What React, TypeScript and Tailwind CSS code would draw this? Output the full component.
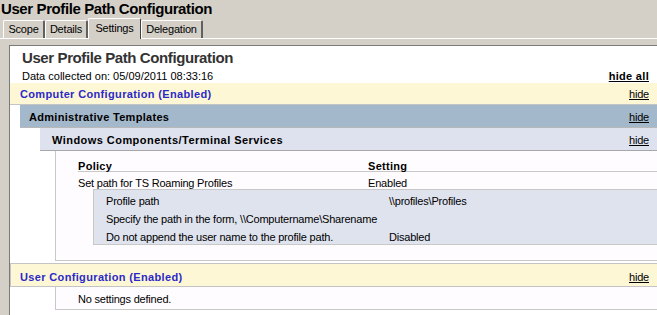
import React from "react"

const tabs = [
  { name: "Scope", w: "w-[42px]" },
  { name: "Details", w: "w-[43px]" },
  { name: "Settings", w: "w-[53px]", active: true },
  { name: "Delegation", w: "w-[62px]" },
]

const details = [
  { name: "Profile path", value: "\\\\profiles\\Profiles" },
  { name: "Specify the path in the form, \\\\Computername\\Sharename", value: "" },
  { name: "Do not append the user name to the profile path.", value: "Disabled" },
]

function Hide() {
  return <span className="underline underline-offset-[1px]">hide</span>
}

export default function App() {
  return (
    <div className="w-[657px] h-[315px] overflow-hidden bg-[#d4d0c8] font-['Liberation_Sans',Arial,sans-serif] text-[11px] tracking-[-0.2px] text-black">
      {/* window title */}
      <div className="h-[17px] pl-[1px] text-[15px] font-bold leading-[18px] tracking-[-0.4px]">
        User Profile Path Configuration
      </div>

      {/* tabs */}
      <div className="flex h-[21px] items-end pl-[3px]">
        {tabs.map((t) =>
          t.active ? (
            <div
              key={t.name}
              className={`${t.w} h-[21px] -mb-[1px] z-10 flex items-center justify-center rounded-t-[2px] border-t border-l border-white border-r border-r-[#404040] bg-[#d4d0c8] pb-[2px]`}
            >
              {t.name}
            </div>
          ) : (
            <div
              key={t.name}
              className={`${t.w} h-[18px] flex items-center justify-center rounded-t-[2px] border-t border-l border-white border-r-2 border-r-[#606060] bg-[#d4d0c8]`}
            >
              {t.name}
            </div>
          )
        )}
      </div>

      {/* tab panel */}
      <div className="border-t border-white pt-[6px] pl-[9px]">
        <div className="h-[300px] border-t border-l border-[#7a7a7a] bg-white">
          {/* report header */}
          <div className="h-[37px] pt-[3px]">
            <div className="h-[17px] pl-[12px] text-[15px] font-bold leading-[17px] tracking-[-0.4px] text-[#333333]">
              User Profile Path Configuration
            </div>
            <div className="mt-[3px] flex h-[14px] items-center justify-between pl-[12px] pr-[8px] leading-[14px]">
              <span className="tracking-normal">Data collected on: 05/09/2011 08:33:16</span>
              <span className="font-bold tracking-[0.3px] underline underline-offset-[1px]">hide all</span>
            </div>
          </div>

          {/* computer configuration */}
          <div className="flex h-[22px] items-center justify-between border-b border-[#c4c4c4] bg-[#fef7d6] pl-[10px] pr-[8px] pt-[2px]">
            <span className="font-bold tracking-[0.35px] text-[#2a2ac8]">Computer Configuration (Enabled)</span>
            <Hide />
          </div>

          <div className="pl-[10px]">
            <div className="flex h-[23px] items-center justify-between border-b border-[#b8b8b8] bg-[#a4b8cc] pl-[9px] pr-[8px] pt-[2px]">
              <span className="font-bold tracking-[0.3px]">Administrative Templates</span>
              <Hide />
            </div>

            <div className="pl-[20px]">
              <div className="flex h-[23px] items-center justify-between border-b border-[#a8a8a8] bg-[#dee2ee] pl-[12px] pr-[8px] pt-[2px]">
                <span className="font-bold tracking-[0.45px]">Windows Components/Terminal Services</span>
                <Hide />
              </div>

              {/* policy table */}
              <div className="ml-[15px] border-l border-b border-[#c8c8c8] bg-[#fffcff] pb-[15px] pl-[22px]">
                <div className="flex h-[21px] border-b border-[#c8c8c8] pt-[9px] font-bold leading-[12px] tracking-[0.3px]">
                  <span className="w-[290px] shrink-0">Policy</span>
                  <span>Setting</span>
                </div>
                <div className="flex h-[17px] pt-[4px] leading-[15px]">
                  <span className="w-[290px] shrink-0">Set path for TS Roaming Profiles</span>
                  <span>Enabled</span>
                </div>
                <div className="ml-[15px] border-t border-l border-b border-[#c8c8c8] bg-[#dfe3ee] pl-[12px]">
                  {details.map((d) => (
                    <div key={d.name} className="flex h-[18px] whitespace-pre pt-[4px] leading-[15px]">
                      <span className="w-[283px] shrink-0">{d.name}</span>
                      <span>{d.value}</span>
                    </div>
                  ))}
                </div>
              </div>
            </div>
          </div>

          {/* user configuration */}
          <div className="mt-[2px] flex h-[24px] items-center justify-between border-t border-l border-b border-[#c4c4c4] bg-[#fef7d6] pl-[9px] pr-[8px] pt-[4px]">
            <span className="font-bold tracking-[0.35px] text-[#2a2ac8]">User Configuration (Enabled)</span>
            <Hide />
          </div>
          <div className="ml-[45px] flex h-[23px] items-center border-l border-b border-[#c8c8c8] bg-[#fffcff] pl-[22px] pt-[2px]">
            No settings defined.
          </div>
        </div>
      </div>
    </div>
  )
}
